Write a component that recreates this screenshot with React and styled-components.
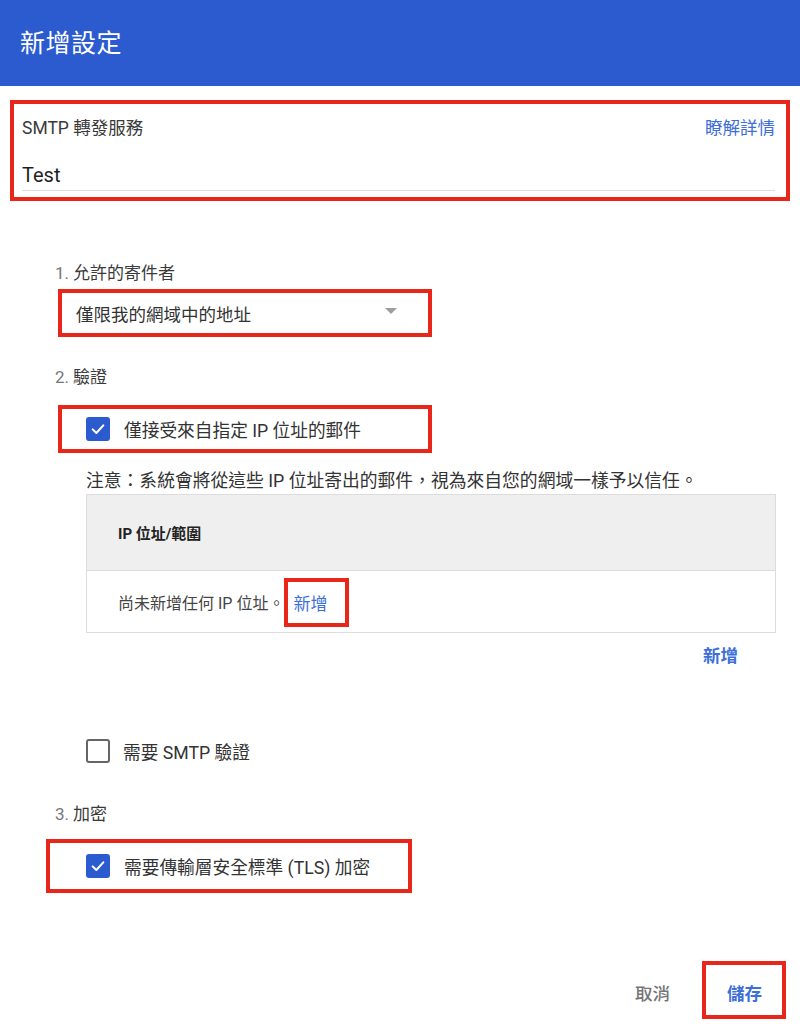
import React from "react";
import styled, { createGlobalStyle } from "styled-components";

const GlobalStyle = createGlobalStyle`
    body {
        margin: 0;
        background: #fff;
        font-family: "Roboto", "Noto Sans CJK TC", sans-serif;
        color: #3a3a3a;
    }
`;

const Page = styled.div`
    width: 800px;
    height: 1024px;
    overflow: hidden;
    display: flex;
    flex-direction: column;
`;

const Header = styled.header`
    height: 86px;
    background-color: #2b5bcf;
    display: flex;
    align-items: center;
    padding: 0 0 5px 20px;
    box-sizing: border-box;
    flex-shrink: 0;
`;

const HeaderTitle = styled.h1`
    margin: 0;
    color: #fff;
    font-size: 25px;
    font-weight: 400;
    letter-spacing: 0.5px;
`;

const Mark = styled.div`
    border: 4px solid #e8261a;
    box-sizing: border-box;
`;

const FieldBox = styled(Mark)`
    margin: 14px 10px 0 10px;
    padding: 12px 11px 6px 8px;
`;

const FieldTop = styled.div`
    display: flex;
    justify-content: space-between;
    font-size: 17.5px;
    line-height: 24px;
`;

const Link = styled.a`
    color: ${props => props.color || "#3d6fd9"};
    font-weight: ${props => (props.bold ? 600 : 400)};
    text-decoration: none;
    cursor: pointer;
`;

const TextInput = styled.div`
    margin-top: 18px;
    height: 32px;
    font-size: 20px;
    line-height: 34px;
    color: #1f1f1f;
    border-bottom: 1px solid #dedede;
`;

const Content = styled.div`
    padding-left: 55px;
    padding-right: 24px;
    display: flex;
    flex-direction: column;
    align-items: flex-start;
`;

const SectionTitle = styled.div`
    margin-top: ${props => props.top}px;
    font-size: 17px;
    line-height: 24px;
    color: #3a3a3a;
    span {
        color: #777;
        margin-right: 4px;
    }
`;

const SelectBox = styled(Mark)`
    margin: 4px 0 0 3px;
    width: 374px;
    height: 48px;
    display: flex;
    align-items: center;
    justify-content: space-between;
    padding: 0 31px 0 14px;
    font-size: 17.5px;
    color: #333;
`;

const Caret = styled.span`
    width: 0;
    height: 0;
    border-left: 6px solid transparent;
    border-right: 6px solid transparent;
    border-top: 6px solid #9e9e9e;
    margin-top: -4px;
`;

const CheckRow = styled.label`
    display: flex;
    align-items: center;
    gap: 14px;
    font-size: 17.7px;
    color: #333;
`;

const CheckMark = styled(Mark)`
    margin: ${props => props.margin};
    width: ${props => props.width}px;
    height: ${props => props.height}px;
    display: flex;
    align-items: center;
    padding-left: ${props => props.inset}px;
`;

const PlainCheck = styled(CheckRow)`
    margin: 71px 0 0 31px;
    height: 24px;
    gap: 13px;
`;

const Box = styled.span`
    width: 24px;
    height: 24px;
    box-sizing: border-box;
    border-radius: 3px;
    display: flex;
    align-items: center;
    justify-content: center;
    background: ${props => (props.checked ? "#2b5bcf" : "#fff")};
    border: ${props => (props.checked ? "none" : "2px solid #666")};
`;

const Note = styled.p`
    margin: 16px 0 0 31px;
    font-size: 17.8px;
    line-height: 24px;
    color: #333;
`;

const Table = styled.div`
    margin: 1px 0 0 31px;
    width: 690px;
    border: 1px solid #dcdcdc;
    box-sizing: border-box;
`;

const TableHead = styled.div`
    height: 75px;
    background: #efefef;
    border-bottom: 1px solid #dcdcdc;
    display: flex;
    align-items: center;
    padding-left: 31px;
    font-size: 15px;
    font-weight: 700;
    color: #222;
`;

const TableRow = styled.div`
    height: 61px;
    display: flex;
    align-items: center;
    padding-left: 31px;
    font-size: 16px;
    color: #444;
`;

const InlineMark = styled(Mark)`
    display: inline-flex;
    align-items: center;
    padding: 0 18px 0 5px;
    height: 49px;
    margin-top: 1px;
    font-size: 17px;
`;

const AddRow = styled.div`
    align-self: stretch;
    display: flex;
    justify-content: flex-end;
    padding-right: 38px;
    margin-top: 11px;
    font-size: 17.5px;
    line-height: 24px;
`;

const Footer = styled.div`
    margin-top: 68px;
    display: flex;
    justify-content: flex-end;
    align-items: center;
    gap: 32px;
    padding-right: 14px;
    font-size: 17.5px;
`;

const Cancel = styled.span`
    color: #757575;
    font-weight: 500;
    padding-top: 4px;
`;

const SaveMark = styled(Mark)`
    height: 58px;
    display: flex;
    align-items: center;
    padding: 4px 20px 0 21px;
`;

const Check = ({ checked }) => (
    <Box checked={checked}>
        {checked && (
            <svg width="16" height="16" viewBox="0 0 24 24">
                <path d="M4 12.5 L9.5 18 L20 6.5" fill="none" stroke="#fff" strokeWidth="3" strokeLinecap="round" strokeLinejoin="round" />
            </svg>
        )}
    </Box>
);

export default function App() {
    return (
        <Page>
            <GlobalStyle />
            <Header>
                <HeaderTitle>新增設定</HeaderTitle>
            </Header>
            <FieldBox>
                <FieldTop>
                    <span>SMTP 轉發服務</span>
                    <Link>瞭解詳情</Link>
                </FieldTop>
                <TextInput>Test</TextInput>
            </FieldBox>
            <Content>
                <SectionTitle top={60}><span>1.</span>允許的寄件者</SectionTitle>
                <SelectBox>
                    <span>僅限我的網域中的地址</span>
                    <Caret />
                </SelectBox>

                <SectionTitle top={28}><span>2.</span>驗證</SectionTitle>
                <CheckMark margin="16px 0 0 3px" width={374} height={48} inset={24}>
                    <CheckRow>
                        <Check checked />
                        僅接受來自指定 IP 位址的郵件
                    </CheckRow>
                </CheckMark>
                <Note>注意：系統會將從這些 IP 位址寄出的郵件，視為來自您的網域一樣予以信任。</Note>
                <Table>
                    <TableHead>IP 位址/範圍</TableHead>
                    <TableRow>
                        尚未新增任何 IP 位址。
                        <InlineMark><Link>新增</Link></InlineMark>
                    </TableRow>
                </Table>
                <AddRow>
                    <Link bold>新增</Link>
                </AddRow>
                <PlainCheck>
                    <Check />
                    需要 SMTP 驗證
                </PlainCheck>

                <SectionTitle top={39}><span>3.</span>加密</SectionTitle>
                <CheckMark margin="13px 0 0 -9px" width={366} height={54} inset={36}>
                    <CheckRow>
                        <Check checked />
                        需要傳輸層安全標準 (TLS) 加密
                    </CheckRow>
                </CheckMark>
            </Content>
            <Footer>
                <Cancel>取消</Cancel>
                <SaveMark><Link bold>儲存</Link></SaveMark>
            </Footer>
        </Page>
    );
}
